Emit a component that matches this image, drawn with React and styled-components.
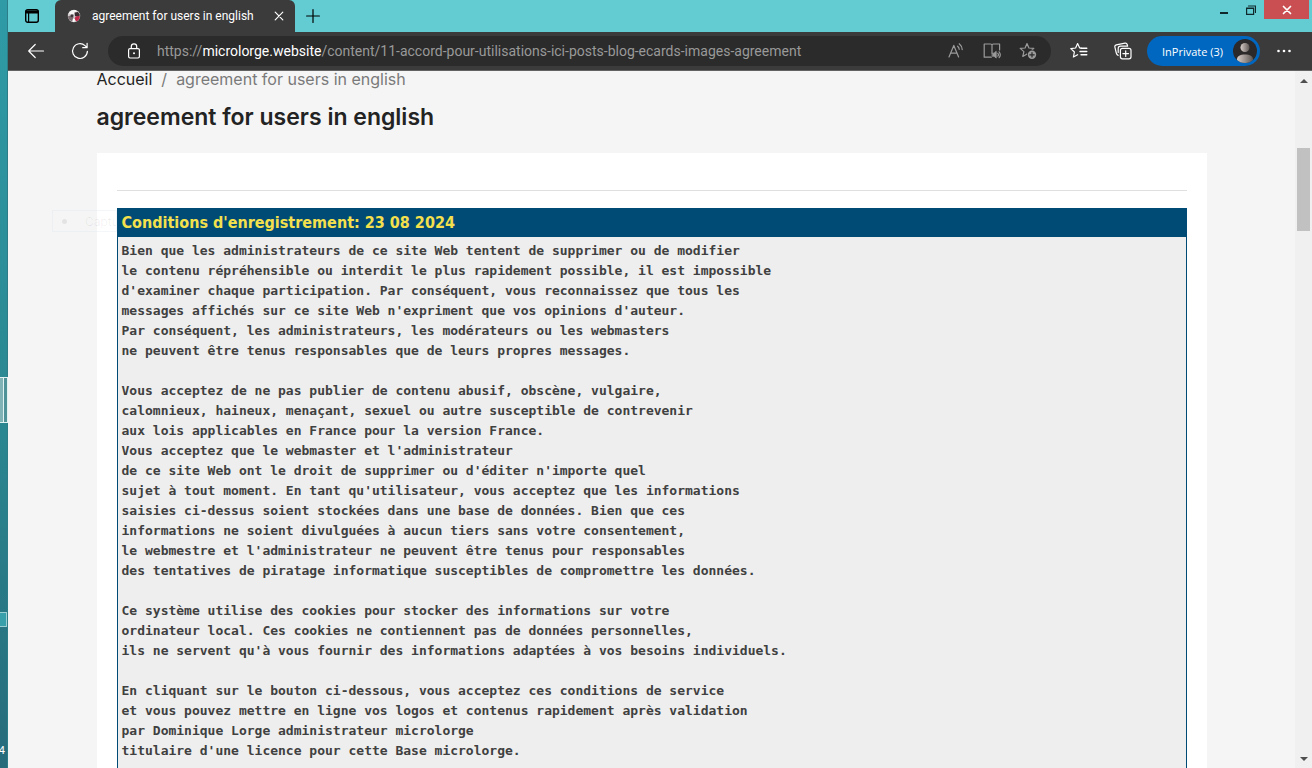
import React, {useState} from "react";
import styled, {createGlobalStyle} from "styled-components";

const TERMS = `Bien que les administrateurs de ce site Web tentent de supprimer ou de modifier
le contenu répréhensible ou interdit le plus rapidement possible, il est impossible
d'examiner chaque participation. Par conséquent, vous reconnaissez que tous les
messages affichés sur ce site Web n'expriment que vos opinions d'auteur.
Par conséquent, les administrateurs, les modérateurs ou les webmasters
ne peuvent être tenus responsables que de leurs propres messages.

Vous acceptez de ne pas publier de contenu abusif, obscène, vulgaire,
calomnieux, haineux, menaçant, sexuel ou autre susceptible de contrevenir
aux lois applicables en France pour la version France.
Vous acceptez que le webmaster et l'administrateur
de ce site Web ont le droit de supprimer ou d'éditer n'importe quel
sujet à tout moment. En tant qu'utilisateur, vous acceptez que les informations
saisies ci-dessus soient stockées dans une base de données. Bien que ces
informations ne soient divulguées à aucun tiers sans votre consentement,
le webmestre et l'administrateur ne peuvent être tenus pour responsables
des tentatives de piratage informatique susceptibles de compromettre les données.

Ce système utilise des cookies pour stocker des informations sur votre
ordinateur local. Ces cookies ne contiennent pas de données personnelles,
ils ne servent qu'à vous fournir des informations adaptées à vos besoins individuels.

En cliquant sur le bouton ci-dessous, vous acceptez ces conditions de service
et vous pouvez mettre en ligne vos logos et contenus rapidement après validation
par Dominique Lorge administrateur microlorge
titulaire d'une licence pour cette Base microlorge.`;

const STAR = "M8 1.5 9.9 6l4.9.4-3.7 3.2 1.1 4.8L8 11.9l-4.2 2.5 1.1-4.8L1.2 6.4 6.1 6z";

const Icon = ({size = 18, box = 18, children}) => (
    <svg width={size} height={size} viewBox={`0 0 ${box} ${box}`} fill="none" stroke="currentColor"
        strokeWidth="1.2" strokeLinecap="round" strokeLinejoin="round" aria-hidden="true">
        {children}
    </svg>
);

const TabsMenuIcon = () => <Icon size={14} box={14}>
    <rect x="0.7" y="0.7" width="12.6" height="12.6" rx="2" strokeWidth="1.4" />
    <path d="M1 2h12v2H1z" fill="currentColor" />
    <path d="M3.6 4v9" strokeWidth="1.2" />
</Icon>;

const Favicon = () => <svg width="14" height="14" viewBox="0 0 14 14" aria-hidden="true">
    <circle cx="7" cy="7" r="6.2" fill="#d3cdd0" />
    <path d="M1.500 4.500C3 1.500 6 .5 9 1.200l1 2.300-5 2z" fill="#f6f4f5" />
    <path d="M.8 7.500 3.500 6.500l3 1.500L5.500 12.500 2.500 11z" fill="#77696d" />
    <path d="M7.500 3.500 11 3l2 3-1.500 2L8 7z" fill="#3b2a30" />
    <path d="M8.500 7.500 12.800 7c.3 2-1 4.500-3.300 5.500L7.500 10z" fill="#c3294a" />
    <circle cx="5" cy="6.800" r="1.500" fill="#40353a" />
    <path d="m6 9.500 2 .4-.6 3-2-.4z" fill="#fff" />
</svg>;

const BackIcon = () => <Icon>
    <path d="M16.5 9H1.8M8.2 2.5 1.7 9l6.5 6.5" />
</Icon>;

const ReloadIcon = () => <Icon>
    <path d="M16.4 9.3A7.4 7.4 0 1 1 14 3.6L16 5.6M16.1 1.3v4.4h-4.4" />
</Icon>;

const LockIcon = () => <Icon size={16} box={16}>
    <rect x="2.6" y="5.6" width="10.8" height="9.4" rx="1.4" />
    <path d="M5.3 5.4V3.6a2.7 2.7 0 0 1 5.4 0v1.8" />
    <circle cx="8" cy="10.3" r="1" fill="currentColor" stroke="none" />
</Icon>;

const ReadAloudIcon = () => <Icon>
    <path d="M2 15 6.8 3.4 11.6 15M3.7 11.2h6.2" />
    <path d="M10.6 4.2c1 .8 1.5 1.8 1.6 3.1M12.2 1.8c1.9 1.5 2.9 3.3 3 5.8" />
</Icon>;

const ReaderIcon = () => <Icon>
    <path d="M8.300 15.200H1.2V2h6.300c.8 0 1.500.5 1.500 1.200v8M9 3.200C9 2.500 9.600 2 10.400 2h6.200v6" />
    <path d="M9.500 11.200h1.500l2.200-1.900v6.800l-2.200-1.900H9.500z" fill="currentColor" strokeWidth=".8" />
    <path d="M14.800 11.300a2 2 0 0 1 0 2.800M16.100 9.800c1.500 1.800 1.500 4 0 5.800" />
</Icon>;

const AddStarIcon = () => <Icon>
    <path d={STAR} />
    <circle cx="13" cy="12.8" r="5" fill="#2b2b2b" stroke="none" />
    <circle cx="13" cy="12.8" r="4.2" fill="currentColor" stroke="none" />
    <path d="M13 10.6V15M10.8 12.8h4.4" stroke="#2b2b2b" />
</Icon>;

const FavoritesIcon = () => <Icon>
    <path d="M11.200 6.200 9.7 6 7.6 1.500 5.600 6l-4.800.6 3.600 3.400-1 5 4.200-2.300" />
    <path d="M11 6.2h5.8M10 9.500h6.800M11 12.800h5.8" strokeWidth="1.4" />
</Icon>;

const CollectionsIcon = () => <Icon>
    <rect x="6.400" y="6.400" width="10.600" height="10.400" rx="2" />
    <path d="M11.700 8.800v5.600M8.900 11.600h5.600" />
    <path d="M4.200 13.400C3 13 2.600 12.200 2.300 11L.9 5.200C.6 4 1.200 3.200 2.300 2.900L11 1.200c1.100-.2 1.900.3 2.200 1.300l.4 1.500M4.200 10.500V6.500c0-1.500.9-2.300 2.300-2.300h7.100" />
</Icon>;

const Avatar = () => <svg width="24" height="24" viewBox="0 0 24 24" aria-hidden="true">
    <defs>
        <linearGradient id="skin">
            <stop offset="0" stopColor="#d7cdc9" />
            <stop offset="1" stopColor="#5d5653" />
        </linearGradient>
        <clipPath id="round"><circle cx="12" cy="12" r="12" /></clipPath>
    </defs>
    <g clipPath="url(#round)">
        <path d="M0 0h24v24H0z" fill="#2b292a" />
        <circle cx="12" cy="8.500" r="4.500" fill="url(#skin)" />
        <path d="M4 24v-3.500c0-3.500 3-5 8-5s8 1.500 8 5V24z" fill="url(#skin)" />
    </g>
</svg>;

const toolbarButtons = [
    {label: "Favoris", icon: <FavoritesIcon />},
    {label: "Collections", icon: <CollectionsIcon />},
];

const App = () => {
    const [url, setUrl] = useState(null);
    return <DesktopStyle>
        <GlobalStyle />
        <DesktopEdgeStyle>
            <DesktopGadgetStyle />
            <DesktopIconStyle />
            <DesktopClockStyle>4</DesktopClockStyle>
        </DesktopEdgeStyle>
        <BrowserStyle>
            <TabStripStyle>
                <TabsMenuStyle aria-label="Menu des onglets"><TabsMenuIcon /></TabsMenuStyle>
                <TabStyle>
                    <Favicon />
                    <span>agreement for users in english</span>
                    <TabCloseStyle aria-label="Fermer l'onglet">
                        <Icon size={10} box={10}><path d="m1.200 1.200 7.600 7.600M8.800 1.200 1.200 8.800" /></Icon>
                    </TabCloseStyle>
                </TabStyle>
                <NewTabStyle aria-label="Nouvel onglet">
                    <Icon size={14} box={14}><path d="M7 .6v12.800M.6 7h12.800" /></Icon>
                </NewTabStyle>
                <WindowButtonsStyle>
                    <WindowButtonStyle aria-label="Réduire">
                        <Icon size={10} box={10}><path d="M1 8h8" strokeWidth="2" strokeLinecap="butt" /></Icon>
                    </WindowButtonStyle>
                    <WindowButtonStyle aria-label="Restaurer">
                        <Icon size={10} box={10}>
                            <path d="M.6 3h7v6.400h-7zM.6 3.500h7M2.500 1h7v6.500" strokeLinejoin="miter" />
                        </Icon>
                    </WindowButtonStyle>
                    <WindowButtonStyle $close aria-label="Fermer">
                        <Icon size={10} box={10}><path d="m1.500 1.500 7 7M8.500 1.500l-7 7" strokeWidth="1.700" /></Icon>
                    </WindowButtonStyle>
                </WindowButtonsStyle>
            </TabStripStyle>
            <ToolbarStyle>
                <NavStyle>
                    <IconButtonStyle aria-label="Retour"><BackIcon /></IconButtonStyle>
                    <IconButtonStyle aria-label="Actualiser"><ReloadIcon /></IconButtonStyle>
                </NavStyle>
                <AddressBarStyle>
                    <IconButtonStyle aria-label="Informations du site"><LockIcon /></IconButtonStyle>
                    <AddressStyle role="textbox" aria-label="Adresse" tabIndex={0} contentEditable suppressContentEditableWarning
                        onInput={evt => setUrl(evt.currentTarget.textContent)} title={url || undefined}>
                        https://<b>microlorge.website</b>/content/11-accord-pour-utilisations-ici-posts-blog-ecards-images-agreement
                    </AddressStyle>
                    <AddressActionsStyle>
                        <IconButtonStyle $dim aria-label="Lecture à voix haute"><ReadAloudIcon /></IconButtonStyle>
                        <IconButtonStyle $dim aria-label="Lecteur immersif"><ReaderIcon /></IconButtonStyle>
                        <IconButtonStyle $dim aria-label="Ajouter aux favoris"><AddStarIcon /></IconButtonStyle>
                    </AddressActionsStyle>
                </AddressBarStyle>
                <ToolbarActionsStyle>
                    {toolbarButtons.map(({label, icon}) =>
                        <IconButtonStyle key={label} aria-label={label}>{icon}</IconButtonStyle>
                    )}
                </ToolbarActionsStyle>
                <ProfileStyle>
                    InPrivate (3)
                    <Avatar />
                </ProfileStyle>
                <IconButtonStyle aria-label="Paramètres">
                    <Icon size={14} box={14}>
                        <g fill="currentColor" stroke="none">
                            <circle cx="1.500" cy="7" r="1.300" /><circle cx="7" cy="7" r="1.300" /><circle cx="12.500" cy="7" r="1.300" />
                        </g>
                    </Icon>
                </IconButtonStyle>
            </ToolbarStyle>
            <ViewportStyle>
                <PageStyle>
                    <ContainerStyle>
                        <BreadcrumbStyle aria-label="Fil d'Ariane">
                            <a href="#accueil">Accueil</a>
                            <span>/</span>
                            <span>agreement for users in english</span>
                        </BreadcrumbStyle>
                        <TitleStyle>agreement for users in english</TitleStyle>
                        <CardStyle>
                            <hr />
                            <TermsTableStyle>
                                <thead>
                                    <tr><th scope="col">Conditions d'enregistrement: 23 08 2024</th></tr>
                                </thead>
                                <tbody>
                                    <tr><td><pre>{TERMS}</pre></td></tr>
                                </tbody>
                            </TermsTableStyle>
                        </CardStyle>
                    </ContainerStyle>
                    <GhostTipStyle><i />Captu</GhostTipStyle>
                </PageStyle>
                <ScrollbarStyle>
                    <ScrollArrowStyle aria-label="Défiler vers le haut">
                        <svg width="8" height="5" viewBox="0 0 8 5"><path d="M0 5 4 1l4 4z" fill="#4f4f4f" /></svg>
                    </ScrollArrowStyle>
                    <ScrollTrackStyle><div /></ScrollTrackStyle>
                    <ScrollArrowStyle aria-label="Défiler vers le bas">
                        <svg width="8" height="5" viewBox="0 0 8 5"><path d="M0 0h8L4 4z" fill="#4f4f4f" /></svg>
                    </ScrollArrowStyle>
                </ScrollbarStyle>
            </ViewportStyle>
        </BrowserStyle>
    </DesktopStyle>;
};

const GlobalStyle = createGlobalStyle`
    *{
        box-sizing: border-box;
    }
    body{
        margin: 0;
        overflow: hidden;
    }
    button{
        font: inherit;
        color: inherit;
        background: none;
        border: 0;
        padding: 0;
        cursor: pointer;
    }
    svg{
        display: block;
        flex: none;
    }
`;

const DesktopStyle = styled.div`
    display: flex;
    height: 100vh;
    font-family: Roboto, "Open Sans", sans-serif;
    font-size: 12px;
`;

const DesktopEdgeStyle = styled.div`
    position: relative;
    flex: none;
    width: 8px;
    background: linear-gradient(#2f9ba6, #2a8791 55%, #276b7b);
    border-right: 1px solid #2c7d88;
`;

const DesktopGadgetStyle = styled.div`
    position: absolute;
    top: 377px;
    left: 0;
    width: 8px;
    height: 46px;
    background: #7fb3b5;
    border: solid #e2f1f1;
    border-width: 1px 1px 1px 0;
    box-shadow: inset -3px 0 #4f9298, inset -4px 0 #e2f1f1;
`;

const DesktopIconStyle = styled.div`
    position: absolute;
    top: 612px;
    left: 0;
    width: 7px;
    height: 15px;
    background: #38a0ab;
    border: solid #9ad0d3;
    border-width: 1px 1px 1px 0;
`;

const DesktopClockStyle = styled.div`
    position: absolute;
    bottom: 8px;
    right: 2px;
    color: white;
    font-size: 11px;
    line-height: 18px;
`;

const BrowserStyle = styled.div`
    display: flex;
    flex-direction: column;
    flex: 1;
    min-width: 0;
    background: #3b3b3b;
`;

const TabStripStyle = styled.div`
    display: flex;
    flex: none;
    height: 32px;
    background: #62ccd2;
    color: #10282b;
`;

const TabsMenuStyle = styled.button`
    display: grid;
    place-items: center;
    width: 47px;
    color: black;
`;

const TabStyle = styled.div`
    display: flex;
    align-items: center;
    width: 240px;
    padding: 0 10px 0 12px;
    border-radius: 6px 6px 0 0;
    background: #3b3b3b;
    color: white;
    span{
        flex: 1;
        margin-left: 11px;
        white-space: nowrap;
    }
`;

const TabCloseStyle = styled.button`
    display: grid;
    place-items: center;
    width: 12px;
    height: 20px;
`;

const NewTabStyle = styled.button`
    display: grid;
    place-items: center;
    width: 36px;
    color: black;
`;

const WindowButtonsStyle = styled.div`
    display: flex;
    align-items: flex-start;
    margin-left: auto;
    padding-right: 3px;
`;

const WindowButtonStyle = styled.button`
    display: grid;
    place-items: center;
    width: ${props => props.$close ? "45px" : "27px"};
    height: 19px;
    background: ${props => props.$close ? "#c94f52" : "transparent"};
    color: ${props => props.$close ? "white" : "#10282b"};
`;

const ToolbarStyle = styled.div`
    display: flex;
    align-items: center;
    flex: none;
    height: 39px;
    padding: 0 16px;
    color: white;
    border-bottom: 1px solid #626262;
`;

const IconButtonStyle = styled.button`
    display: grid;
    place-items: center;
    flex: none;
    width: 24px;
    height: 24px;
    color: ${props => props.$dim ? "#9b9b9b" : "white"};
`;

const NavStyle = styled.div`
    display: flex;
    gap: 20px;
    margin-right: 16px;
`;

const AddressBarStyle = styled.div`
    display: flex;
    align-items: center;
    flex: 1;
    min-width: 0;
    height: 30px;
    padding: 0 11px 0 14px;
    border-radius: 15px;
    background: #2b2b2b;
`;

const AddressStyle = styled.div`
    flex: 1;
    min-width: 0;
    overflow: hidden;
    margin-left: 11px;
    color: #999999;
    font-size: 14px;
    line-height: 20px;
    white-space: nowrap;
    outline: none;
    b{
        color: white;
        font-weight: normal;
    }
`;

const AddressActionsStyle = styled.div`
    display: flex;
    gap: 12px;
`;

const ToolbarActionsStyle = styled.div`
    display: flex;
    gap: 20px;
    margin: 0 12px 0 16px;
`;

const ProfileStyle = styled.button`
    display: flex;
    align-items: center;
    justify-content: space-between;
    flex: none;
    width: 113px;
    height: 30px;
    margin-right: 12px;
    padding: 0 3px 0 15px;
    border-radius: 15px;
    background: #0067c0;
    font-family: "Open Sans", sans-serif;
    font-size: 11px;
    white-space: nowrap;
`;

const ViewportStyle = styled.div`
    display: flex;
    flex: 1;
    min-height: 0;
`;

const PageStyle = styled.main`
    position: relative;
    flex: 1;
    min-width: 0;
    overflow: hidden;
    background: #f5f5f5;
    color: #232323;
    font-family: Inter, sans-serif;
`;

const ContainerStyle = styled.div`
    max-width: 1110px;
    margin: 0 auto;
`;

const BreadcrumbStyle = styled.nav`
    display: flex;
    gap: 9px;
    color: #7a7a7a;
    font-size: 16px;
    line-height: 16px;
    a{
        color: #232323;
        text-decoration: none;
    }
`;

const TitleStyle = styled.h1`
    margin: 14px 0 20px;
    font-size: 23px;
    line-height: 32px;
    font-weight: 600;
`;

const CardStyle = styled.section`
    padding: 37px 20px 20px;
    background: white;
    hr{
        margin: 0 0 17px;
        border: 0;
        border-top: 1px solid #dfdfdf;
    }
`;

const TermsTableStyle = styled.table`
    width: 100%;
    border: 1px solid #004b75;
    border-spacing: 0;
    background: #eeeeee;
    th{
        padding: 0 4px;
        background: #004b75;
        color: #f4e04d;
        font-family: "DejaVu Sans Condensed", "DejaVu Sans", sans-serif;
        font-size: 16px;
        line-height: 28px;
        font-weight: bold;
        text-align: left;
    }
    td{
        padding: 4px 4px 24px;
    }
    pre{
        margin: 0;
        color: #404040;
        font-family: "DejaVu Sans Mono", monospace;
        font-size: 13px;
        line-height: 20px;
        font-weight: bold;
    }
`;

const GhostTipStyle = styled.div`
    position: absolute;
    top: 139px;
    left: 44px;
    display: flex;
    align-items: center;
    gap: 18px;
    width: 65px;
    height: 22px;
    padding-left: 9px;
    overflow: hidden;
    border: 1px solid rgba(220, 228, 240, 0.3);
    color: rgba(0, 0, 0, 0.06);
    pointer-events: none;
    i{
        flex: none;
        width: 5px;
        height: 5px;
        border-radius: 50%;
        background: rgba(0, 0, 0, 0.07);
    }
`;

const ScrollbarStyle = styled.div`
    display: flex;
    flex-direction: column;
    flex: none;
    width: 17px;
    background: #f0f0f0;
`;

const ScrollArrowStyle = styled.button`
    display: grid;
    place-items: center;
    height: 18px;
`;

const ScrollTrackStyle = styled.div`
    flex: 1;
    padding: 59px 2px 0;
    div{
        height: 83px;
        background: #c1c1c1;
    }
`;

export default App;
